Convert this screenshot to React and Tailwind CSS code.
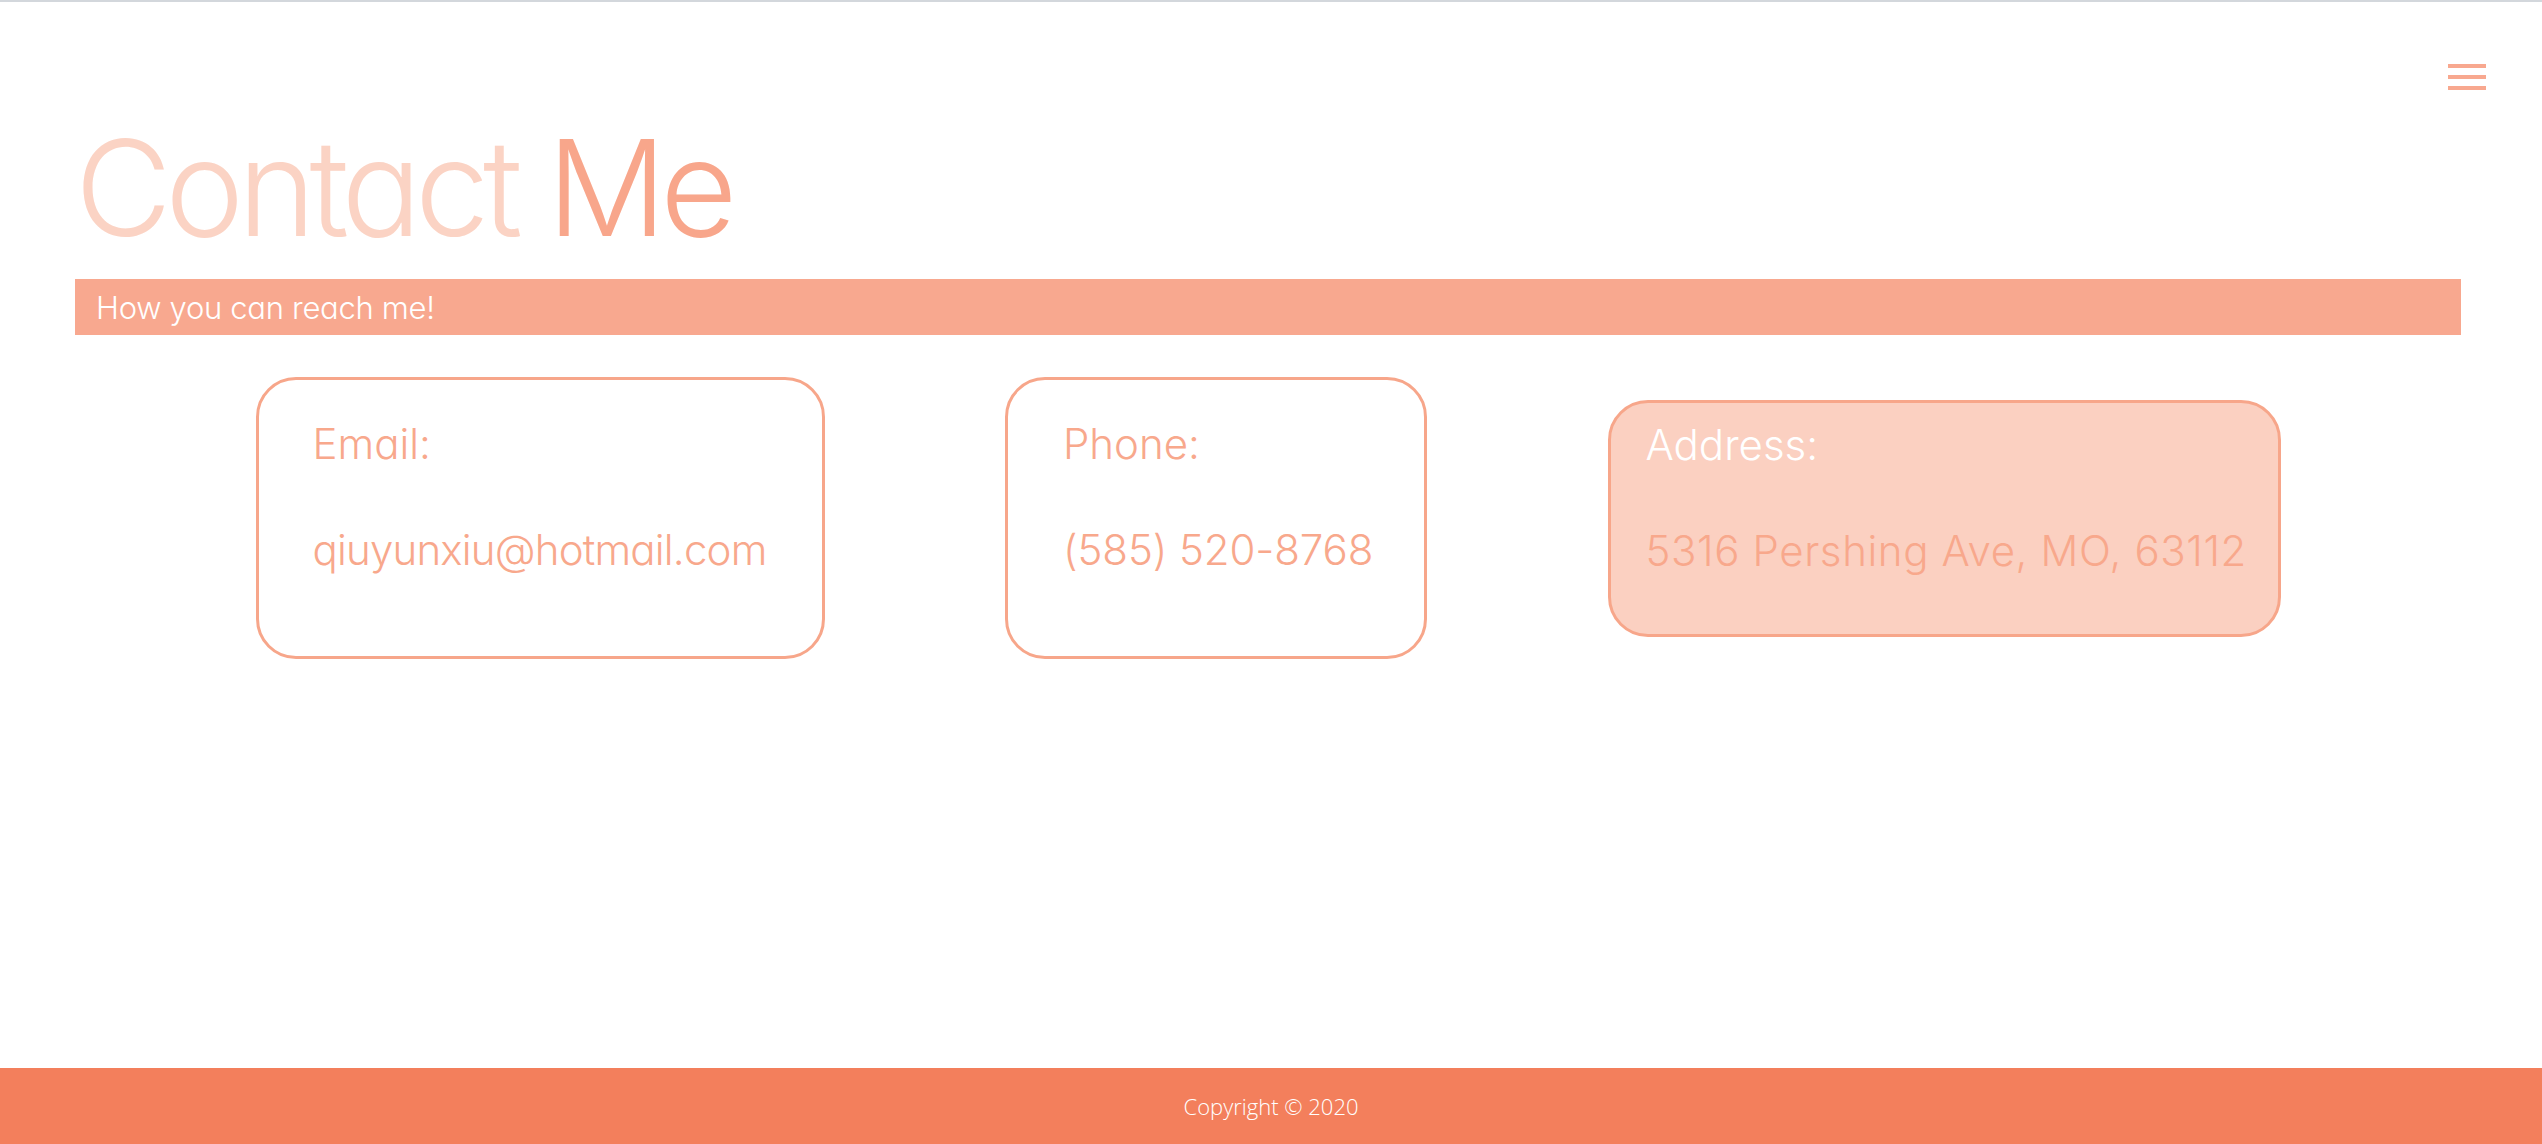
export default function App() {
  const cards = [
    { label: "Email:", value: "qiuyunxiu@hotmail.com", w: "w-[569px] h-[282px] pl-[54px] pt-[43px]", vt: "tracking-[-0.8px]", active: false },
    { label: "Phone:", value: "(585) 520-8768", w: "w-[422px] h-[282px] pl-[55px] pt-[43px]", vt: "tracking-[-0.1px]", active: false },
    { label: "Address:", value: "5316 Pershing Ave, MO, 63112", w: "w-[673px] h-[237px] pl-[35px] pt-[21px]", vt: "tracking-[0.6px]", active: true },
  ];
  return (
    <div className="h-screen flex flex-col bg-white font-['Inter','Lato',sans-serif] [font-feature-settings:'cv11']">
      <div className="h-[2px] shrink-0 bg-[#d3d7dc]" />
      <header className="flex justify-end pr-[56px] pt-[62px]">
        <button className="flex w-[38px] flex-col gap-[7px]" aria-label="menu">
          <span className="block h-[4px] w-[38px] bg-[#f8a88f]" />
          <span className="block h-[4px] w-[38px] bg-[#f8a88f]" />
          <span className="block h-[4px] w-[38px] bg-[#f8a88f]" />
        </button>
      </header>
      <main className="ml-[75px] w-[2386px]">
        <h1 className="mt-[31px] text-[133px] font-light leading-none tracking-[-6.5px]">
          <span className="text-[#fbd3c4]">Contact</span>{" "}
          <span className="text-[#f8a68b]">Me</span>
        </h1>
        <div className="mt-[25px] flex h-[56px] items-center bg-[#f8a88f] pl-[21px]">
          <p className="text-[31px] font-light leading-none tracking-[-0.3px] text-white">How you can reach me!</p>
        </div>
        <div className="mt-[42px] flex items-center justify-evenly">
          {cards.map((c) => (
            <div
              key={c.label}
              className={
                "flex flex-col gap-[64px] rounded-[40px] border-[3px] border-[#f7a68a] " +
                c.w +
                (c.active ? " bg-[#fbd0c1]" : " bg-white")
              }
            >
              <p className={"text-[42px] font-light leading-none " + (c.active ? "text-white" : "text-[#f8a88c]")}>
                {c.label}
              </p>
              <p className={"text-[42px] font-light leading-none text-[#f8a88c] whitespace-nowrap " + c.vt}>{c.value}</p>
            </div>
          ))}
        </div>
      </main>
      <footer className="mt-auto flex h-[76px] shrink-0 items-center justify-center bg-[#f37f5c]">
        <p className="font-['Open_Sans',sans-serif] text-[22px] font-light text-white">Copyright © 2020</p>
      </footer>
    </div>
  );
}
